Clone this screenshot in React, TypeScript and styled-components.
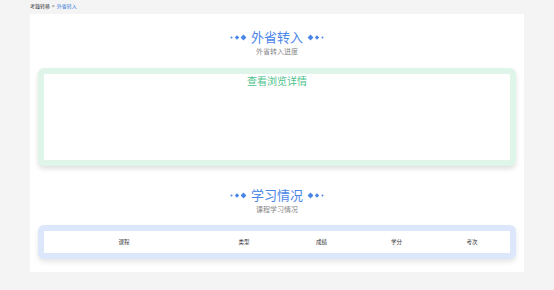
import React from 'react';
import styled, { createGlobalStyle } from 'styled-components';

const GlobalStyle = createGlobalStyle`
  html, body {
    margin: 0;
    padding: 0;
    background: #f4f4f5;
    font-family: "Noto Sans CJK SC", "Noto Sans", sans-serif;
  }
`;

const Page = styled.div`
  width: 554px;
  height: 290px;
  box-sizing: border-box;
  padding: 2px 30px 0 30px;
  display: flex;
  flex-direction: column;
`;

const Breadcrumb = styled.div`
  font-size: 5px;
  line-height: 8px;
  height: 12px;
  color: #333;
  display: flex;
  gap: 2px;
`;

const CrumbActive = styled.span`
  color: #3a7bd5;
`;

const MainCard = styled.div`
  background: #fff;
  width: 494px;
  height: 258px;
  box-sizing: border-box;
  padding: 14px 8px 0 8px;
  display: flex;
  flex-direction: column;
`;

const SectionHead = styled.div`
  display: flex;
  flex-direction: column;
  align-items: center;
`;

const TitleRow = styled.div`
  display: flex;
  align-items: center;
  gap: 3px;
  height: 18px;
`;

const Title = styled.div`
  font-size: 13px;
  line-height: 18px;
  color: #4a86e8;
`;

const SubTitle = styled.div`
  font-size: 7px;
  line-height: 10px;
  color: #888;
`;

const GreenCard = styled.div`
  margin-top: 12px;
  height: 98px;
  box-sizing: border-box;
  border: 6px solid #dff5e9;
  border-radius: 6px;
  background: #fff;
  box-shadow: 0 3px 5px rgba(0, 0, 0, 0.12);
  display: flex;
  justify-content: center;
`;

const GreenLink = styled.div`
  font-size: 10px;
  line-height: 14px;
  color: #4cc38a;
`;

const StudyHead = styled(SectionHead)`
  margin-top: 20px;
`;

const BlueCard = styled.div`
  margin-top: 11px;
  height: 34px;
  box-sizing: border-box;
  border: 6px solid #dce7fb;
  border-radius: 6px;
  background: #fff;
  box-shadow: 0 3px 5px rgba(0, 0, 0, 0.1);
  display: grid;
  grid-template-columns: 160px 80px 75px 75px 76px;
  align-items: center;
`;

const HeadCell = styled.div`
  font-size: 5.5px;
  color: #333;
  text-align: center;
`;

const Diamonds = ({ flip }: { flip?: boolean }) => (
  <svg width="18" height="7" viewBox="0 0 18 7" style={flip ? { transform: 'scaleX(-1)' } : undefined}>
    <circle cx="1.5" cy="3.5" r="1" fill="#4a86e8" />
    <path d="M7 1.3 L9.2 3.5 L7 5.7 L4.8 3.5 Z" fill="#4a86e8" />
    <path d="M13.5 0.6 L16.4 3.5 L13.5 6.4 L10.6 3.5 Z" fill="#4a86e8" />
  </svg>
);

const columns = ['课程', '类型', '成绩', '学分', '考次'];

export default function App() {
  return (
    <>
      <GlobalStyle />
      <Page>
        <Breadcrumb>
          <span>考籍转移</span>
          <span>&gt;</span>
          <CrumbActive>外省转入</CrumbActive>
        </Breadcrumb>
        <MainCard>
          <SectionHead>
            <TitleRow>
              <Diamonds />
              <Title>外省转入</Title>
              <Diamonds flip />
            </TitleRow>
            <SubTitle>外省转入进度</SubTitle>
          </SectionHead>
          <GreenCard>
            <GreenLink>查看浏览详情</GreenLink>
          </GreenCard>
          <StudyHead>
            <TitleRow>
              <Diamonds />
              <Title>学习情况</Title>
              <Diamonds flip />
            </TitleRow>
            <SubTitle>课程学习情况</SubTitle>
          </StudyHead>
          <BlueCard>
            {columns.map((c) => (
              <HeadCell key={c}>{c}</HeadCell>
            ))}
          </BlueCard>
        </MainCard>
      </Page>
    </>
  );
}
